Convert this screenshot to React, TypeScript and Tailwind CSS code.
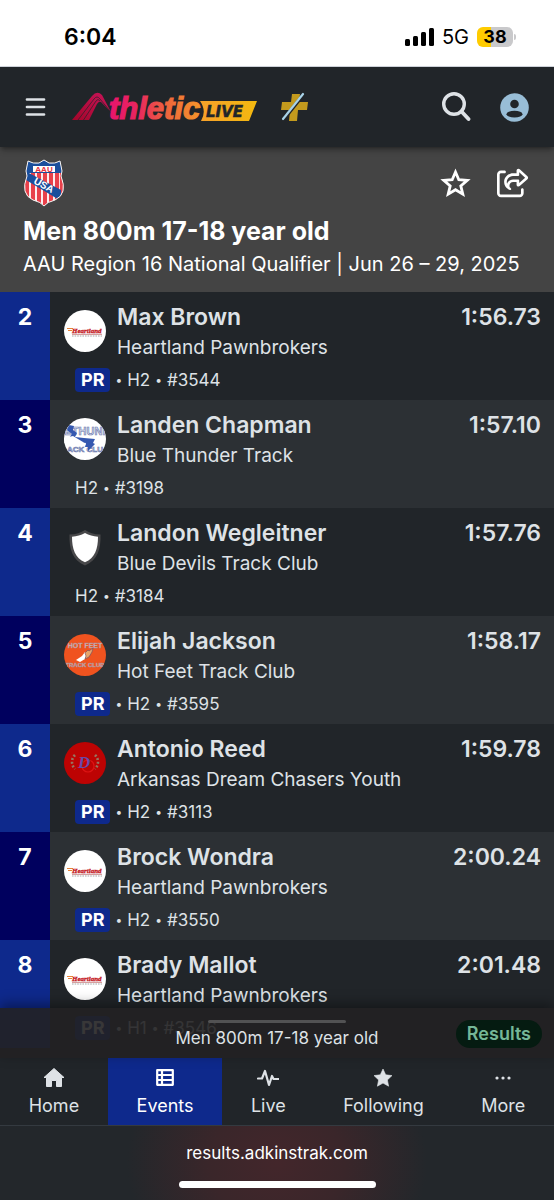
import React from "react";
import { FaRegShareFromSquare } from "react-icons/fa6";

const results = [
  { place: 2, name: "Max Brown", club: "Heartland Pawnbrokers", logo: "heartland", time: "1:56.73", pr: true, heat: "H2", bib: "#3544" },
  { place: 3, name: "Landen Chapman", club: "Blue Thunder Track", logo: "thunder", time: "1:57.10", pr: false, heat: "H2", bib: "#3198" },
  { place: 4, name: "Landon Wegleitner", club: "Blue Devils Track Club", logo: "shield", time: "1:57.76", pr: false, heat: "H2", bib: "#3184" },
  { place: 5, name: "Elijah Jackson", club: "Hot Feet Track Club", logo: "hotfeet", time: "1:58.17", pr: true, heat: "H2", bib: "#3595" },
  { place: 6, name: "Antonio Reed", club: "Arkansas Dream Chasers Youth", logo: "dream", time: "1:59.78", pr: true, heat: "H2", bib: "#3113" },
  { place: 7, name: "Brock Wondra", club: "Heartland Pawnbrokers", logo: "heartland", time: "2:00.24", pr: true, heat: "H2", bib: "#3550" },
  { place: 8, name: "Brady Mallot", club: "Heartland Pawnbrokers", logo: "heartland", time: "2:01.48", pr: true, heat: "H1", bib: "#3546" },
];

const HeartlandLogo = () => (
  <svg viewBox="0 0 42 42" className="size-[42px] rounded-full bg-white" aria-hidden="true">
    <path d="M3 18.5h6M4 20.5h4" stroke="#e8833a" strokeWidth="1.2" />
    <text x="8" y="23" fontFamily="Liberation Serif, serif" fontSize="7" fontWeight="700" fontStyle="italic" fill="#c4161c" stroke="#c4161c" strokeWidth="0.3">
      Heartland
    </text>
    <path d="M8 24.3h30" stroke="#a33" strokeWidth="0.6" />
    <path d="M8 26h30" stroke="#a5a5a5" strokeWidth="1.2" strokeDasharray="1.6 1" />
  </svg>
);

const ThunderLogo = () => (
  <svg viewBox="0 0 42 42" className="size-[42px] rounded-full bg-white" aria-hidden="true">
    <g fontFamily="Liberation Sans, sans-serif" fontWeight="700" stroke="#6b78ae" strokeWidth="0.6" textAnchor="middle">
      <text x="21" y="17" fontSize="11" fill="#d5daea">ETHUNI</text>
      <text x="21" y="34" fontSize="8" fill="#c3cae2">ACK CLU</text>
    </g>
    <path d="M5 7l5 1-1 4 4 3-2 4 9 1 11 1-2 4 2 1-7 7 0-4-3 0 1-4-8-1-9-4 3-4-5-4z" fill="#3558b0" />
    <path d="M0 20l9-2 10 6 3 3-11 1-11-3z" fill="#fff" />
  </svg>
);

const ShieldLogo = () => (
  <svg viewBox="0 0 42 42" className="size-[42px]" aria-hidden="true">
    <path d="M21 4c4 2.500 9 4.500 15.500 4.500C37 23 33.500 34.500 21 39.500 8.500 34.500 5 23 5.500 8.500 12 8.500 17 6.500 21 4z" fill="#48484a" />
    <path d="M21 7c4 2.200 8 3.500 13 3.700C34 23 31 32 21 36.200 11 32 8 23 8 10.700 13 10.500 17 9.200 21 7z" fill="#fff" />
  </svg>
);

const HotFeetLogo = () => (
  <svg viewBox="0 0 42 42" className="size-[42px] rounded-full bg-[#f0531f]" aria-hidden="true">
    <g fontFamily="Liberation Sans, sans-serif" fontWeight="700" fill="#e8c3bd" stroke="#a98791" strokeWidth="0.4" textAnchor="middle">
      <text x="21" y="14" fontSize="7">HOT FEET</text>
      <text x="21" y="33" fontSize="6">TRACK CLUB</text>
    </g>
    <path d="M12 26l6-4 3-4 3 1-3 6-5 3z" fill="#fff" />
    <path d="M21 19l3-3 1 1 4-3-1 4-3 5-4 2 1-3z" fill="#e7a46a" stroke="#7a5261" strokeWidth="0.7" />
  </svg>
);

const DreamLogo = () => (
  <svg viewBox="0 0 42 42" className="size-[42px] rounded-full bg-[#bd0303]" aria-hidden="true">
    <path d="M11 13c-4 4-4 10 0 14M31 13c4 4 4 10 0 14" fill="none" stroke="#98745f" strokeWidth="2.600" strokeDasharray="2 1.800" />
    <circle cx="24" cy="24" r="6" fill="none" stroke="#dd1414" strokeWidth="1.200" />
    <text x="14" y="26" fontFamily="Liberation Serif, serif" fontSize="17" fontStyle="italic" fontWeight="700" fill="#6848a8">
      D
    </text>
  </svg>
);

const clubLogos = {
  heartland: HeartlandLogo,
  thunder: ThunderLogo,
  shield: ShieldLogo,
  hotfeet: HotFeetLogo,
  dream: DreamLogo,
};

const BrandLogo = () => (
  <svg width="188" height="34" viewBox="0 0 188 34" className="overflow-visible" aria-hidden="true">
    <defs>
      <linearGradient id="brandText" gradientUnits="userSpaceOnUse" x1="38" y1="0" x2="130" y2="0">
        <stop offset="0" stopColor="#e8146c" />
        <stop offset="0.300" stopColor="#e8265f" />
        <stop offset="0.650" stopColor="#ee6a3a" />
        <stop offset="1" stopColor="#f6982a" />
      </linearGradient>
      <linearGradient id="brandMark" x1="0" y1="1" x2="1" y2="0">
        <stop offset="0" stopColor="#a3062a" />
        <stop offset="1" stopColor="#c8145a" />
      </linearGradient>
      <linearGradient id="brandLive" x1="0" y1="0" x2="1" y2="0">
        <stop offset="0" stopColor="#f6a02a" />
        <stop offset="1" stopColor="#f3b90f" />
      </linearGradient>
    </defs>
    <path d="M0 30L20 6q5-6 10-1L39 22 29 12q-2-1-4 2L17 30z" fill="url(#brandMark)" />
    <path d="M6 30L22 9q3-4 6 0L38 21M11.500 30L24 11q2-3 4 0" fill="none" stroke="#212529" strokeWidth="0.700" />
    <text x="37" y="29" fontFamily="Liberation Sans, sans-serif" fontSize="31" fontWeight="700" fontStyle="italic" fill="url(#brandText)" stroke="url(#brandText)" strokeWidth="1.200">
      thletic
    </text>
    <path d="M128 11h57l-8 20h-48q6-10-1-20z" fill="url(#brandLive)" />
    <text x="134" y="27" fontFamily="DejaVu Sans, sans-serif" fontSize="15" fontWeight="700" fontStyle="italic" fill="#212529" stroke="#212529" strokeWidth="0.500">
      LIVE
    </text>
  </svg>
);

const AauLogo = () => (
  <svg width="42" height="50" viewBox="0 0 42 50" aria-hidden="true">
    <defs>
      <clipPath id="aauShield">
        <path d="M21 2l5 3q6 1 11-2l2 10-1 5q7 18-6 24-8 2-11 6-3-4-11-6Q-3 36 4 18l-1-5L5 3q5 3 11 2z" />
      </clipPath>
    </defs>
    <g clipPath="url(#aauShield)">
      <rect width="42" height="50" fill="#fff" />
      <path d="M4 14v34M10 14v34M16 14v34M22 14v34M28 14v34M34 14v34M39 14v34" stroke="#e8404a" strokeWidth="4.200" />
      <rect width="42" height="15" fill="#1b4f9c" />
      <path d="M4 14l34 18v11L3 22z" fill="#1b4f9c" />
    </g>
    <rect x="10" y="8" width="22" height="6" fill="#fff" />
    <text x="21" y="13.500" fontFamily="Liberation Sans, sans-serif" fontSize="8" fontWeight="700" fill="#e8303a" textAnchor="middle">
      AAU
    </text>
    <text transform="translate(10 25) rotate(29)" fontFamily="Liberation Sans, sans-serif" fontSize="10" fontWeight="700" fill="#fff">
      USA
    </text>
    <path d="M21 2l5 3q6 1 11-2l2 10-1 5q7 18-6 24-8 2-11 6-3-4-11-6Q-3 36 4 18l-1-5L5 3q5 3 11 2z" fill="none" stroke="#f3f0f0" strokeWidth="1" />
  </svg>
);

const StatusBar = () => (
  <div className="flex h-[67px] items-center justify-between border-b border-gray-300 bg-white pt-2 pr-[38px] pl-16 text-black">
    <span className="text-[23px] font-semibold">6:04</span>
    <div className="flex items-center gap-2">
      <svg width="29" height="18" viewBox="0 0 29 18" aria-hidden="true">
        <rect x="0" y="11" width="5" height="7" rx="1.500" />
        <rect x="8" y="8" width="5" height="10" rx="1.500" />
        <rect x="16" y="4" width="5" height="14" rx="1.500" />
        <rect x="24" y="0" width="5" height="18" rx="1.500" />
      </svg>
      <span className="text-xl">5G</span>
      <div className="flex items-center gap-px">
        <span className="h-5 w-9 rounded-md bg-linear-to-r from-[#ffcc00] from-40% to-[#c9c9cb] to-40% text-center text-lg/5 font-bold">
          38
        </span>
        <span className="h-[6px] w-[2px] rounded-r bg-[#c9c9cb]" />
      </div>
    </div>
  </div>
);

const Header = () => (
  <header className="relative flex h-20 items-center justify-between bg-[#212529] pr-[25px] pl-[25px] shadow-md shadow-black/30">
    <div className="flex items-center">
      <button aria-label="Menu">
        <svg width="21" height="18" viewBox="0 0 21 18" stroke="#dee2e6" strokeWidth="2.700" strokeLinecap="round" aria-hidden="true">
          <path d="M2 1.500h17M2 9h17M2 16.500h17" />
        </svg>
      </button>
      <a href="#home" aria-label="Athletic Live" className="ml-[26px]">
        <BrandLogo />
      </a>
      <svg className="ml-5" width="30" height="30" viewBox="0 0 30 30" aria-hidden="true">
        <path d="M12 2h8l-1 8h9l-1 8h-9l-1 11H9l1-11H1l1-8h9z" fill="#c39a1d" />
        <path d="M4 27L24 2" stroke="#212529" strokeWidth="3.500" />
        <path d="M3 27L23 2" stroke="#a9d3e8" strokeWidth="2.200" strokeLinecap="round" />
      </svg>
    </div>
    <div className="flex items-center gap-[29px]">
      <button aria-label="Search">
        <svg width="30" height="30" viewBox="0 0 30 30" fill="none" stroke="#dee2e6" strokeLinecap="round" aria-hidden="true">
          <circle cx="13" cy="12" r="10.300" strokeWidth="3.400" />
          <path d="M20.500 19.500l7 7.500" strokeWidth="3.800" />
        </svg>
      </button>
      <button aria-label="Account">
        <svg width="29" height="29" viewBox="0 0 29 29" aria-hidden="true">
          <circle cx="14.500" cy="14.500" r="14.300" fill="#98bdd6" />
          <circle cx="14.500" cy="11" r="4.300" fill="#212529" />
          <ellipse cx="14.500" cy="21.200" rx="8" ry="3.400" fill="#212529" />
        </svg>
      </button>
    </div>
  </header>
);

const EventBanner = () => (
  <section className="bg-[#444444] px-[23px] pt-[11px] pb-3 text-white">
    <div className="flex items-center justify-between pr-[2px]">
      <AauLogo />
      <div className="flex items-center gap-[26px]">
        <button aria-label="Follow event">
          <svg width="31" height="30" viewBox="0 0 31 30" fill="none" stroke="currentColor" strokeWidth="2.800" aria-hidden="true">
            <path d="M15.500 4l3.300 7.700 8.400.7-6.400 5.500 2 8.200-7.300-4.400-7.300 4.400 2-8.200-6.400-5.500 8.400-.7z" />
          </svg>
        </button>
        <button aria-label="Share">
          <FaRegShareFromSquare className="size-8" />
        </button>
      </div>
    </div>
    <h1 className="mt-[6px] text-[25px]/[34px] font-bold">Men 800m 17-18 year old</h1>
    <p className="text-xl/8">AAU Region 16 National Qualifier | Jun 26 – 29, 2025</p>
  </section>
);

const Dot = () => <span className="text-xs">•</span>;

const ResultRow = ({ place, name, club, logo, time, pr, heat, bib }) => {
  const ClubLogo = clubLogos[logo];

  return (
    <li className="flex bg-[#212529] even:bg-[#2c3034] [&>span]:bg-[#0e298c] even:[&>span]:bg-[#00005e]">
      <span className="w-[50px] pt-[10px] text-center text-[23px]/[30px] font-bold text-white">{place}</span>
      <div className="flex-1 pt-[10px] pr-[13px] pb-1 pl-[14px]">
        <div className="flex gap-[11px]">
          <div className="pt-2">
            <ClubLogo />
          </div>
          <div className="flex-1">
            <div className="flex justify-between text-[23px]/[30px] font-semibold">
              <h2>{name}</h2>
              <span>{time}</span>
            </div>
            <p className="text-[19px]/8">{club}</p>
          </div>
        </div>
        <p className="flex items-center gap-[5px] pl-[11px] text-[17px]/8">
          {pr && (
            <>
              <span className="rounded-sm bg-[#0e298c] px-[6px] text-lg/6 font-bold text-white">PR</span>
              <Dot />
            </>
          )}
          <span>{heat}</span>
          <Dot />
          <span>{bib}</span>
        </p>
      </div>
    </li>
  );
};

const tabs = [
  {
    label: "Home",
    icon: <path d="M10 0.500L20 9.500H17.500V18.500H12.500V12.500H7.500V18.500H2.500V9.500H0z" fill="currentColor" stroke="currentColor" strokeLinejoin="round" />,
  },
  {
    label: "Events",
    active: true,
    icon: <path d="M2.200 2.200h15.600v14.600H2.200zM7 2.200v14.600M2.200 7h15.600M2.200 12h15.600" fill="none" stroke="currentColor" strokeWidth="2.200" strokeLinejoin="round" />,
  },
  {
    label: "Live",
    icon: <path d="M0 10.500h4L7 3l4 14 3-9 1.500 3H21" fill="none" stroke="currentColor" strokeWidth="2.200" strokeLinejoin="round" strokeLinecap="round" />,
  },
  {
    label: "Following",
    icon: <path d="M10 1l2.700 5.800 6.300.8-4.600 4.300 1.200 6.300L10 15.100l-5.600 3.100 1.200-6.300L1 7.600l6.300-.8z" fill="currentColor" stroke="currentColor" strokeWidth="0.600" />,
  },
  {
    label: "More",
    icon: <path d="M4 10h.01M10 10h.01M16 10h.01" stroke="currentColor" strokeWidth="3.200" strokeLinecap="round" />,
  },
];

const BottomBar = () => (
  <footer className="sticky bottom-0 -mt-10">
    <div className="relative grid h-[50px] grid-cols-[1fr_auto_1fr] items-start bg-[#222122]/90 pt-3 shadow-[0_-4px_12px_rgba(0,0,0,0.4)]">
      <span className="absolute top-3 left-1/2 h-[3px] w-[138px] -translate-x-1/2 rounded-full bg-[#525253]" />
      <p className="col-start-2 text-[17px]/9">Men 800m 17-18 year old</p>
      <a href="#results" className="mr-3 justify-self-end rounded-full bg-[#051b11] px-[11px] text-lg/7 font-semibold text-[#75b798]">
        Results
      </a>
    </div>
    <nav className="flex border-b border-[#343a40] bg-[#212529]">
      {tabs.map(({ label, icon, active }) => (
        <a
          key={label}
          href={`#${label.toLowerCase()}`}
          className={`flex flex-auto flex-col items-center pt-[10px] pb-[5px] text-lg/7 ${active ? "bg-[#0e298c] text-white" : ""}`}
        >
          <svg viewBox="-1 0 22 20" className="mb-1 h-5 w-[22px]" aria-hidden="true">
            {icon}
          </svg>
          {label}
        </a>
      ))}
    </nav>
    <div className="flex flex-col items-center bg-[#212529] bg-[radial-gradient(ellipse_150px_130px_at_center,#43262b_0%,#3a262a_45%,#23272b_100%)] pt-[13px] pb-3 text-white">
      <span className="text-[17px]/7">results.adkinstrak.com</span>
      <span className="mt-[14px] h-[7px] w-[197px] rounded-full bg-white" />
    </div>
  </footer>
);

const App = () => {
  return (
    <div className="min-h-screen bg-[#212529] font-['Inter','Liberation_Sans',sans-serif] text-[#dee2e6]">
      <StatusBar />
      <Header />
      <EventBanner />
      <ul>
        {results.map((result) => (
          <ResultRow key={result.place} {...result} />
        ))}
      </ul>
      <BottomBar />
    </div>
  );
};

export default App;
